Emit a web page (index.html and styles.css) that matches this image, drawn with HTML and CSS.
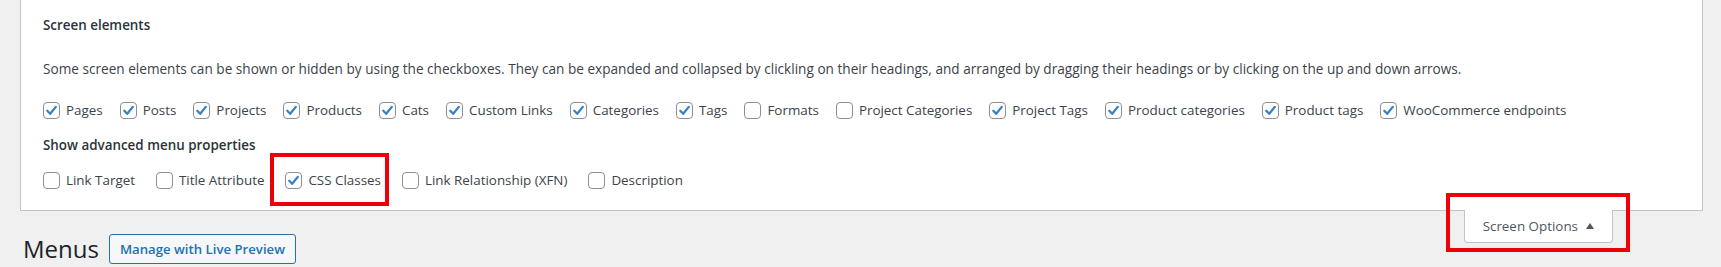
FILE: index.html
```html
<!DOCTYPE html>
<html lang="en">
<head>
<meta charset="utf-8">
<title>Menus</title>
<link rel="stylesheet" href="styles.css">
</head>
<body>
<div class="panel">
  <h5 class="heading first">Screen elements</h5>
  <p class="desc">Some screen elements can be shown or hidden by using the checkboxes. They can be expanded and collapsed by clickling on their headings, and arranged by dragging their headings or by clicking on the up and down arrows.</p>
  <div class="prefs row-main">
    <label class="pref"><span class="cb on"><svg viewBox="0 0 17 17" width="17" height="17"><path d="M4.3 8.8 L7.2 11.8 L12.8 4.9" /></svg></span>Pages</label>
    <label class="pref"><span class="cb on"><svg viewBox="0 0 17 17" width="17" height="17"><path d="M4.3 8.8 L7.2 11.8 L12.8 4.9" /></svg></span>Posts</label>
    <label class="pref"><span class="cb on"><svg viewBox="0 0 17 17" width="17" height="17"><path d="M4.3 8.8 L7.2 11.8 L12.8 4.9" /></svg></span>Projects</label>
    <label class="pref"><span class="cb on"><svg viewBox="0 0 17 17" width="17" height="17"><path d="M4.3 8.8 L7.2 11.8 L12.8 4.9" /></svg></span>Products</label>
    <label class="pref"><span class="cb on"><svg viewBox="0 0 17 17" width="17" height="17"><path d="M4.3 8.8 L7.2 11.8 L12.8 4.9" /></svg></span>Cats</label>
    <label class="pref"><span class="cb on"><svg viewBox="0 0 17 17" width="17" height="17"><path d="M4.3 8.8 L7.2 11.8 L12.8 4.9" /></svg></span>Custom Links</label>
    <label class="pref"><span class="cb on"><svg viewBox="0 0 17 17" width="17" height="17"><path d="M4.3 8.8 L7.2 11.8 L12.8 4.9" /></svg></span>Categories</label>
    <label class="pref"><span class="cb on"><svg viewBox="0 0 17 17" width="17" height="17"><path d="M4.3 8.8 L7.2 11.8 L12.8 4.9" /></svg></span>Tags</label>
    <label class="pref"><span class="cb"></span>Formats</label>
    <label class="pref"><span class="cb"></span>Project Categories</label>
    <label class="pref"><span class="cb on"><svg viewBox="0 0 17 17" width="17" height="17"><path d="M4.3 8.8 L7.2 11.8 L12.8 4.9" /></svg></span>Project Tags</label>
    <label class="pref"><span class="cb on"><svg viewBox="0 0 17 17" width="17" height="17"><path d="M4.3 8.8 L7.2 11.8 L12.8 4.9" /></svg></span>Product categories</label>
    <label class="pref"><span class="cb on"><svg viewBox="0 0 17 17" width="17" height="17"><path d="M4.3 8.8 L7.2 11.8 L12.8 4.9" /></svg></span>Product tags</label>
    <label class="pref"><span class="cb on"><svg viewBox="0 0 17 17" width="17" height="17"><path d="M4.3 8.8 L7.2 11.8 L12.8 4.9" /></svg></span>WooCommerce endpoints</label>
  </div>
  <h5 class="heading second">Show advanced menu properties</h5>
  <div class="prefs row-adv">
    <label class="pref"><span class="cb"></span>Link Target</label>
    <label class="pref"><span class="cb"></span>Title Attribute</label>
    <label class="pref marked"><span class="cb on"><svg viewBox="0 0 17 17" width="17" height="17"><path d="M4.3 8.8 L7.2 11.8 L12.8 4.9" /></svg></span>CSS Classes</label>
    <label class="pref"><span class="cb"></span>Link Relationship (XFN)</label>
    <label class="pref"><span class="cb"></span>Description</label>
  </div>
</div>
<div class="below">
  <div class="title-row">
    <h1 class="title">Menus</h1>
    <a class="btn">Manage with Live Preview</a>
  </div>
  <div class="tab">Screen Options <span class="arrow"></span></div>
</div>
</body>
</html>
```

FILE: styles.css
```css
* { box-sizing: border-box; }
html, body { margin: 0; padding: 0; }
body {
  background: #f0f0f1;
  font-family: "Open Sans", "Noto Sans", sans-serif;
  font-size: 13.4px;
  color: #3c434a;
  width: 1721px;
  height: 267px;
  overflow: hidden;
}
.panel {
  margin: 0 18px 0 20px;
  background: #fff;
  border: 1px solid #c3c4c7;
  border-top: none;
  padding: 15px 0 20px 22px;
}
.heading {
  margin: 0;
  font-size: 13.4px;
  font-weight: 600;
  line-height: 20px;
  color: #2c3338;
}
.heading.second { margin-top: 15px; }
.desc {
  margin: 24px 0 0 0;
  font-size: 13.62px;
  line-height: 20px;
}
.prefs {
  display: flex;
  margin-top: 21px;
  line-height: 20px;
}
.row-main { gap: 17px; }
.row-adv { gap: 21px; margin-top: 15px; }
.pref {
  display: flex;
  align-items: center;
  gap: 6px;
  height: 20px;
  white-space: nowrap;
  position: relative;
}
.cb {
  width: 17px;
  height: 17px;
  border: 1px solid #8c8f94;
  border-radius: 4px;
  background: #fff;
  display: flex;
  align-items: center;
  justify-content: center;
  flex: none;
}
.cb svg { display: block; margin: -1px; }
.cb svg path {
  fill: none;
  stroke: #3582c4;
  stroke-width: 2.3;
  stroke-linecap: round;
  stroke-linejoin: round;
}
.marked::after {
  content: "";
  position: absolute;
  left: -15px;
  right: -8px;
  top: -17px;
  bottom: -16px;
  border: 4.5px solid #ee0008;
}
.below {
  display: flex;
  justify-content: space-between;
  align-items: flex-start;
  padding: 0 108px 0 20px;
}
.title-row {
  display: flex;
  align-items: center;
  gap: 10px;
  margin-top: 23px;
}
.title {
  margin: 0;
  font-size: 24px;
  font-weight: 400;
  line-height: 30px;
  color: #1d2327;
  padding-left: 3px;
}
.btn {
  display: flex;
  align-items: center;
  height: 30px;
  padding: 0 10px;
  border: 1px solid #2271b1;
  border-radius: 3px;
  background: #f6f7f7;
  color: #2271b1;
  font-size: 13.2px;
  font-weight: 600;
}
.tab {
  position: relative;
  margin-top: -1px;
  height: 33px;
  padding: 0 18px;
  display: flex;
  align-items: center;
  gap: 8px;
  background: #fff;
  border: 1px solid #c3c4c7;
  border-top: none;
  border-radius: 0 0 4px 4px;
  color: #50575e;
  font-size: 13.4px;
}
.arrow {
  width: 0;
  height: 0;
  border-left: 4.5px solid transparent;
  border-right: 4.5px solid transparent;
  border-bottom: 6px solid #50575e;
  margin-top: -1px;
}
.tab::after {
  content: "";
  position: absolute;
  left: -19px;
  right: -18px;
  top: -17px;
  bottom: -10px;
  border: 4.5px solid #ee0008;
}
```
